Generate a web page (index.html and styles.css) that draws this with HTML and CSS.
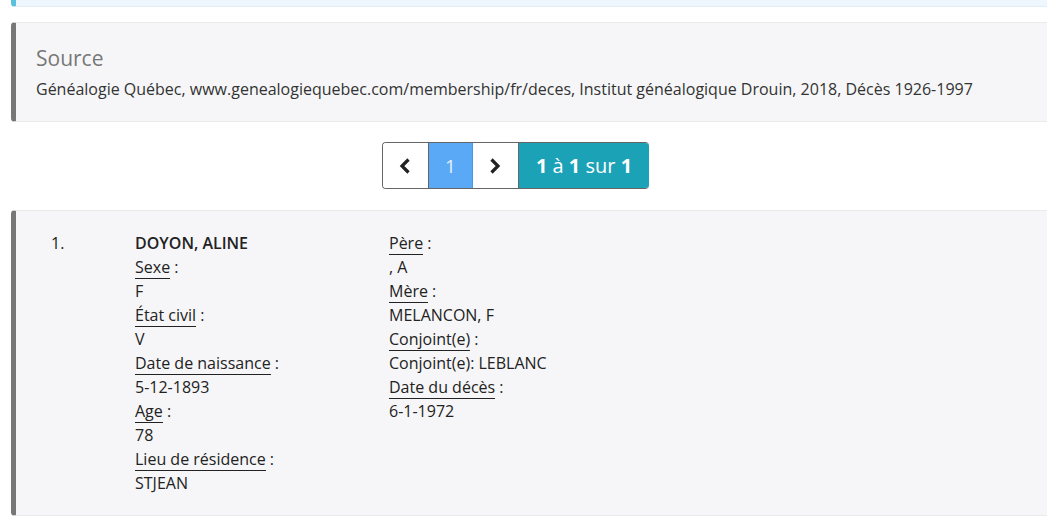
FILE: index.html
```html
<!DOCTYPE html>
<html lang="fr">
<head>
    <meta charset="UTF-8">
    <title>Décès - Généalogie Québec</title>
    <link rel="stylesheet" href="styles.css">
</head>
<body>
    <div class="page">
        <!-- Previous info callout, scrolled off -->
        <div class="callout callout-info callout-cut"></div>

        <!-- Source -->
        <div class="callout">
            <h4>Source</h4>
            <p>Généalogie Québec, www.genealogiequebec.com/membership/fr/deces, Institut généalogique Drouin, 2018, Décès 1926-1997</p>
        </div>

        <!-- Pagination -->
        <div class="pager-wrap">
            <div class="pager">
                <a class="pager-btn" href="#">
                    <svg width="14" height="18" viewBox="0 0 14 18"><path d="M10.5 2.5 L4 9 L10.5 15.5" fill="none" stroke="#222" stroke-width="3.2"/></svg>
                </a>
                <a class="pager-btn pager-active" href="#">1</a>
                <a class="pager-btn" href="#">
                    <svg width="14" height="18" viewBox="0 0 14 18"><path d="M3.5 2.5 L10 9 L3.5 15.5" fill="none" stroke="#222" stroke-width="3.2"/></svg>
                </a>
                <span class="pager-info"><span><b>1</b> à <b>1</b> sur <b>1</b></span></span>
            </div>
        </div>

        <!-- Record -->
        <div class="callout record">
            <div class="rec-num">1.</div>
            <div class="rec-col">
                <div class="rec-name">DOYON, ALINE</div>
                <div><abbr>Sexe</abbr> :</div>
                <div>F</div>
                <div><abbr>État civil</abbr> :</div>
                <div>V</div>
                <div><abbr>Date de naissance</abbr> :</div>
                <div>5-12-1893</div>
                <div><abbr>Age</abbr> :</div>
                <div>78</div>
                <div><abbr>Lieu de résidence</abbr> :</div>
                <div>STJEAN</div>
            </div>
            <div class="rec-col">
                <div><abbr>Père</abbr> :</div>
                <div>, A</div>
                <div><abbr>Mère</abbr> :</div>
                <div>MELANCON, F</div>
                <div><abbr>Conjoint(e)</abbr> :</div>
                <div>Conjoint(e): LEBLANC</div>
                <div><abbr>Date du décès</abbr> :</div>
                <div>6-1-1972</div>
            </div>
        </div>
    </div>
</body>
</html>
```

FILE: styles.css
```css
body {
    margin: 0;
    font-family: 'Open Sans', sans-serif;
    font-size: 16px;
    line-height: 24px;
    color: #222;
    background: #fff;
    overflow: hidden;
}

.page {
    width: 1009px;
    margin-left: 11px;
}

.callout {
    width: 1080px;
    box-sizing: border-box;
    padding: 20px;
    margin-bottom: 20px;
    background: #f6f6f8;
    border: 1px solid #eaeaea;
    border-left: 5px solid #777;
    border-radius: 4px;
}

.callout h4 {
    margin: 0 0 3px;
    font-size: 21px;
    line-height: 31px;
    font-weight: normal;
    color: #777;
}

.callout p {
    margin: 0;
    color: #333;
}

.callout-info {
    background: #eef7fd;
    border-color: #e2eef7;
    border-left-color: #5bc0de;
}

.callout-cut {
    height: 7px;
    padding: 0;
    border-top: none;
    border-radius: 0 0 4px 4px;
    margin-bottom: 15px;
}

.pager-wrap {
    display: flex;
    justify-content: center;
    margin: 0 0 21px;
}

.pager {
    display: flex;
    height: 45px;
    border: 1px solid #666;
    border-right: none;
    border-radius: 4px;
    overflow: hidden;
}

.pager-btn {
    display: flex;
    align-items: center;
    justify-content: center;
    width: 45px;
    border-right: 1px solid #666;
    background: #fff;
    color: #222;
    text-decoration: none;
    font-size: 19px;
}

.pager-btn.pager-active {
    width: 43px;
    background: #5aa9f7;
    border-right: 1px solid #4c98e2;
    color: #e6eefa;
}

.pager-info {
    display: flex;
    align-items: center;
    padding: 0 17px;
    margin: -1px 0;
    background: #1ba2b6;
    color: #fff;
    font-size: 20px;
}

.record {
    display: grid;
    grid-template-columns: 99px 254px 1fr;
}

.rec-num {
    padding-left: 15px;
}

.rec-name {
    font-weight: 600;
}

abbr {
    text-decoration: none;
    border-bottom: 1px solid #222;
}
```
